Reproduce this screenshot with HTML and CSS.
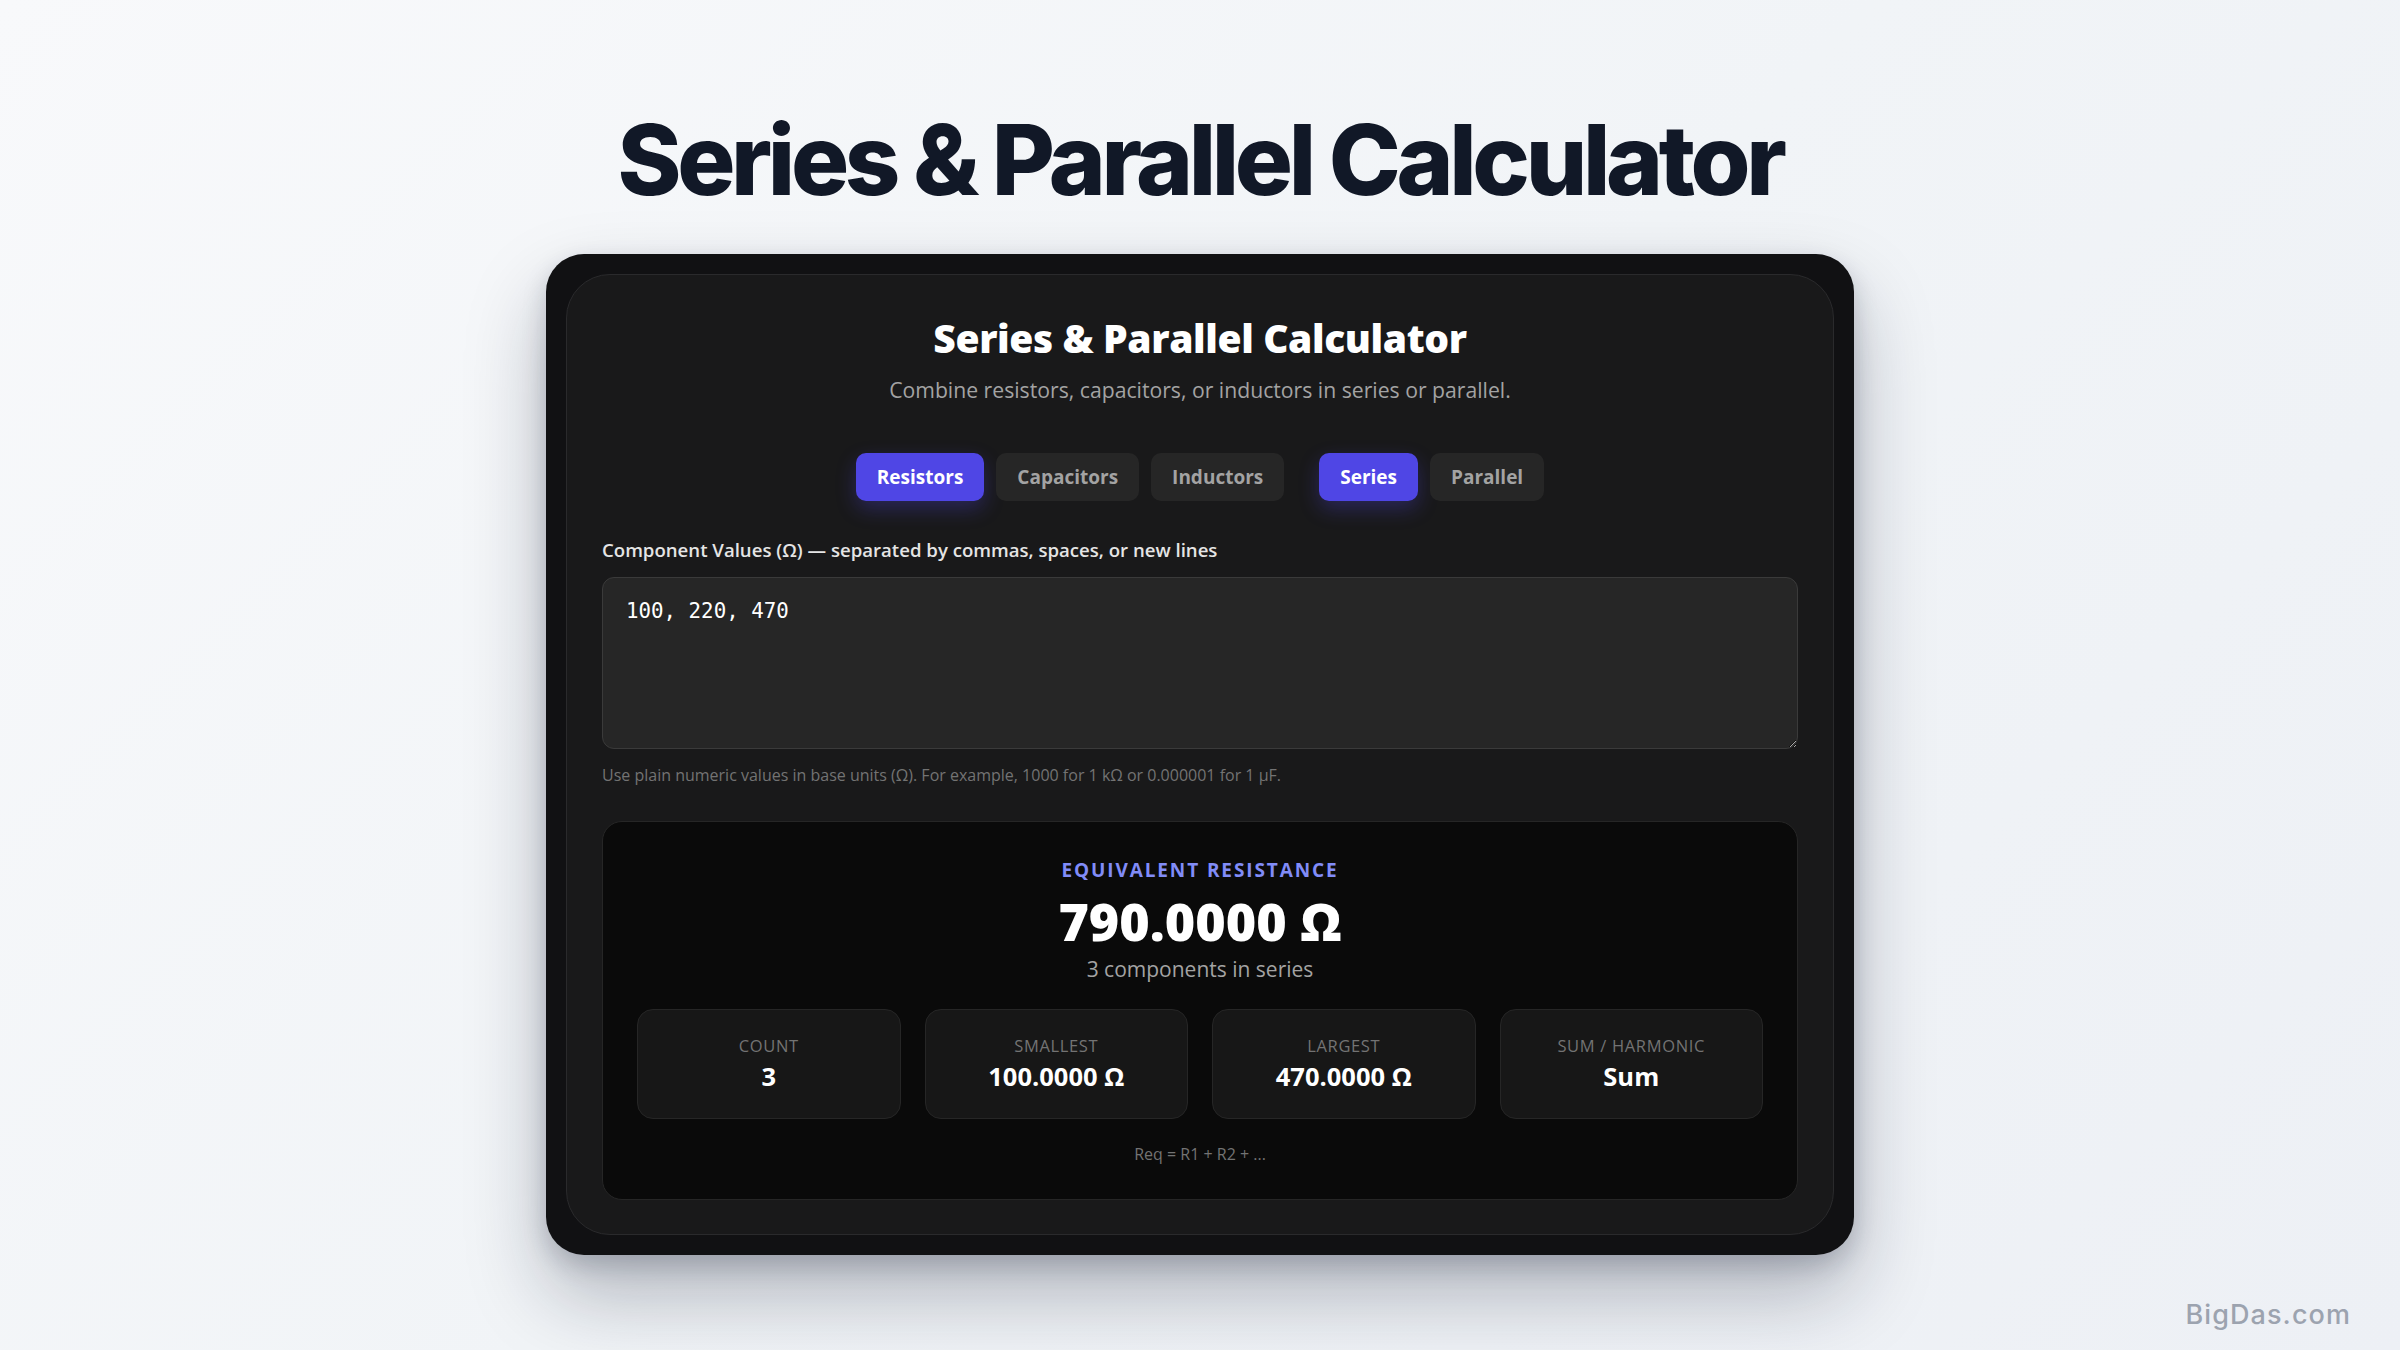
FILE: index.html
```html
<!DOCTYPE html>
<html lang="en">
<head>
<meta charset="utf-8">
<title>Series &amp; Parallel Calculator</title>
<link rel="stylesheet" href="styles.css">
</head>
<body>
<main class="page">
  <h1 class="page-title">Series &amp; Parallel Calculator</h1>
  <div class="frame">
    <section class="card">
      <h2 class="card-title">Series &amp; Parallel Calculator</h2>
      <p class="card-sub">Combine resistors, capacitors, or inductors in series or parallel.</p>
      <div class="toolbar">
        <div class="group">
          <button class="btn active">Resistors</button>
          <button class="btn">Capacitors</button>
          <button class="btn">Inductors</button>
        </div>
        <div class="group">
          <button class="btn active">Series</button>
          <button class="btn">Parallel</button>
        </div>
      </div>
      <label class="field-label" for="vals">Component Values (Ω) — separated by commas, spaces, or new lines</label>
      <textarea id="vals" class="values">100, 220, 470</textarea>
      <p class="hint">Use plain numeric values in base units (Ω). For example, 1000 for 1 kΩ or 0.000001 for 1 µF.</p>
      <div class="result">
        <div class="result-label">EQUIVALENT RESISTANCE</div>
        <div class="result-value">790.0000 Ω</div>
        <div class="result-sub">3 components in series</div>
        <div class="stats">
          <div class="stat"><div class="stat-label">COUNT</div><div class="stat-value">3</div></div>
          <div class="stat"><div class="stat-label">SMALLEST</div><div class="stat-value">100.0000 Ω</div></div>
          <div class="stat"><div class="stat-label">LARGEST</div><div class="stat-value">470.0000 Ω</div></div>
          <div class="stat"><div class="stat-label">SUM / HARMONIC</div><div class="stat-value">Sum</div></div>
        </div>
        <div class="formula">Req = R1 + R2 + ...</div>
      </div>
    </section>
  </div>
</main>
<div class="watermark">BigDas.com</div>
</body>
</html>
```
FILE: styles.css
```css
* { box-sizing: border-box; }
html, body { margin: 0; padding: 0; }
body {
  width: 2400px;
  height: 1350px;
  overflow: hidden;
  background: linear-gradient(135deg, #f8f9fb 0%, #f1f4f7 50%, #edf0f5 100%);
  font-family: "Open Sans", "Noto Sans", sans-serif;
  position: relative;
}
.page {
  display: flex;
  flex-direction: column;
  align-items: center;
  padding-top: 100px;
}
.page-title {
  margin: 0;
  font-family: Inter, "Noto Sans", sans-serif;
  font-weight: 800;
  font-size: 97px;
  line-height: 120px;
  letter-spacing: -0.045em;
  color: #111827;
}
.frame {
  margin-top: 34px;
  width: 1308px;
  padding: 20px;
  background: #111113;
  border-radius: 38px;
  box-shadow: 0 40px 80px rgba(15, 23, 42, 0.28), 0 10px 24px rgba(15, 23, 42, 0.18);
}
.card {
  background: #19191a;
  border: 1px solid #2a2a2c;
  border-radius: 44px;
  padding: 39.5px 35px 34px;
  display: flex;
  flex-direction: column;
}
.card-title {
  margin: 0;
  text-align: center;
  color: #ffffff;
  font-weight: 800;
  font-size: 39px;
  line-height: 46px;
  letter-spacing: -0.01em;
}
.card-sub {
  margin: 14px 0 0;
  text-align: center;
  color: #a3a3a3;
  font-size: 21.2px;
  line-height: 30px;
}
.toolbar {
  margin-top: 48px;
  display: flex;
  justify-content: center;
  gap: 35px;
}
.group { display: flex; gap: 12px; }
.btn {
  height: 48px;
  padding: 0 21px;
  border: none;
  border-radius: 10px;
  background: #262626;
  color: #a3a3a3;
  font-family: "Open Sans", sans-serif;
  font-weight: 700;
  font-size: 19px;
}
.btn.active {
  background: #4f46e5;
  color: #ffffff;
  box-shadow: 0 8px 20px rgba(79, 70, 229, 0.3);
}
.field-label {
  margin-top: 36px;
  color: #e5e5e5;
  font-weight: 600;
  font-size: 18.6px;
  line-height: 26px;
}
.values {
  margin-top: 14px;
  height: 172px;
  width: 100%;
  background: #262626;
  border: 1px solid #3a3a3a;
  border-radius: 12px;
  color: #ffffff;
  font-family: "DejaVu Sans Mono", "Liberation Mono", monospace;
  font-size: 20.8px;
  line-height: 28px;
  padding: 19px 23px;
  resize: vertical;
  outline: none;
}
.hint {
  margin: 15px 0 0;
  color: #737373;
  font-size: 16px;
  line-height: 22px;
}
.result {
  margin-top: 35px;
  background: #0a0a0a;
  border: 1px solid #262626;
  border-radius: 20px;
  padding: 36px 34px 34px;
  display: flex;
  flex-direction: column;
  align-items: center;
}
.result-label {
  color: #818cf8;
  font-weight: 700;
  font-size: 19px;
  line-height: 24px;
  letter-spacing: 0.1em;
}
.result-value {
  margin-top: 7px;
  color: #ffffff;
  font-weight: 800;
  font-size: 52px;
  line-height: 64px;
}
.result-sub {
  margin-top: 2px;
  color: #a3a3a3;
  font-size: 21px;
  line-height: 28px;
}
.stats {
  margin-top: 26px;
  width: 100%;
  display: grid;
  grid-template-columns: repeat(4, 1fr);
  gap: 24px;
}
.stat {
  background: #171717;
  border: 1px solid #262626;
  border-radius: 16px;
  padding: 25px 10px 26px;
  text-align: center;
}
.stat-label {
  color: #737373;
  font-size: 16.5px;
  line-height: 22px;
  letter-spacing: 0.04em;
}
.stat-value {
  margin-top: 3px;
  color: #ffffff;
  font-weight: 700;
  font-size: 25.5px;
  line-height: 32px;
}
.formula {
  margin-top: 24px;
  color: #737373;
  font-size: 16px;
  line-height: 22px;
}
.watermark {
  position: absolute;
  right: 49px;
  bottom: 19px;
  color: #9ca3af;
  font-family: Inter, sans-serif;
  font-weight: 500;
  font-size: 27px;
  letter-spacing: 0.04em;
}
```
